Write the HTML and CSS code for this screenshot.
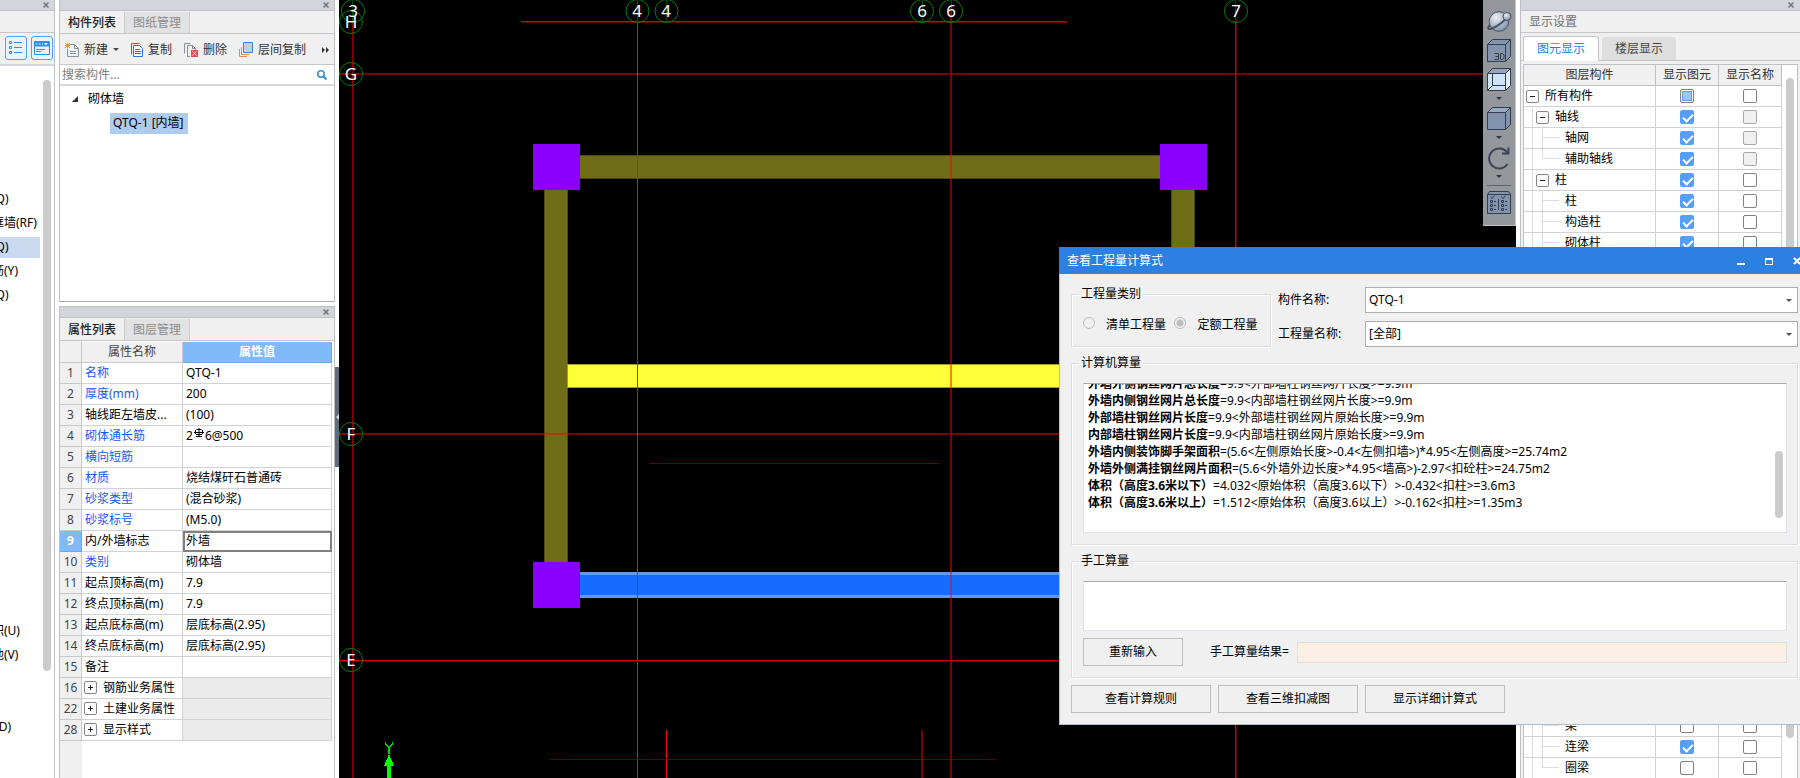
FILE: index.html
```html
<!DOCTYPE html>
<html lang="zh-CN">
<head>
<meta charset="utf-8">
<title>查看工程量计算式</title>
<link rel="stylesheet" href="styles.css">
</head>
<body>
<div class="app">

  <nav class="modules">
    <div class="strip"><button class="close" aria-label="关闭"><svg viewBox="0 0 6 6"><path d="M.5 .5 5.5 5.5M5.5 .5 .5 5.5"/></svg></button></div>
    <div class="modules-head"></div>
    <div class="modules-tools">
      <button class="mode" aria-label="列表视图"><svg width="14" height="14" viewBox="0 0 14 14" fill="none" stroke="#2f8fe8"><path d="M.5 .5h2v2h-2zM.5 5.5h2v2h-2zM.5 10.500h2v2h-2zM5 1.500h8M5 6.500h8M5 11.500h8"/></svg></button>
      <button class="mode" aria-label="面板视图"><svg width="16" height="14" viewBox="0 0 16 14" fill="none" stroke="#2f8fe8"><path d="M.5 .5h15v13h-15z"/><path d="M1 1h14v4H1z" fill="#2f8fe8"/><path d="M2 8.500h9M2 10.500h5"/><path d="M2 3h1.500M5 3h1.500M8 3h1" stroke="#fff"/><path d="M10 2h4l-2 2.500z" fill="#fff" stroke="none"/></svg></button>
    </div>
    <div class="modules-body">
      <ul class="module-list">
        <li>剪力墙(Q)</li>
        <li>人防门框墙(RF)</li>
        <li class="is-current">砌体墙(Q)</li>
        <li>砌体加筋(Y)</li>
        <li>保温墙(Q)</li>
        <li class="module-gap"></li>
        <li>建筑面积(U)</li>
        <li>土建其他(V)</li>
        <li></li><li></li>
        <li>自定义 (D)</li>
      </ul>
      <div class="scroll-thumb modules-thumb"></div>
    </div>
  </nav>

  <div class="side">
    <section class="panel components">
      <div class="strip"><button class="close" aria-label="关闭"><svg viewBox="0 0 6 6"><path d="M.5 .5 5.5 5.5M5.5 .5 .5 5.5"/></svg></button></div>
      <div class="tabs"><button class="tab is-active">构件列表</button><button class="tab">图纸管理</button></div>
      <div class="toolbar">
        <button class="tool tool-new"><svg width="14" height="14" viewBox="0 0 14 14" fill="none"><path d="M4.500 1.500h5l4 4v8h-11v-8" fill="#f4f5f6" stroke="#87909b"/><path d="M9.500 1.500v4h4M5 8.500h6M5 10.500h6" stroke="#87909b"/><path d="M0 0l5 5M5 0L0 5M2.500 0v5M0 2.500h5" stroke="#f0962e"/></svg>新建<i class="caret"></i></button>
        <button class="tool tool-copy"><svg width="12" height="14" viewBox="0 0 12 14" fill="none" stroke="#2e75cf"><path d="M8.500 .5h-8v11"/><path d="M2.500 2.500h6l3 3v8h-9z" fill="#fff"/><path d="M4 6.500h5M4 8.500h6M4 10.500h6"/></svg>复制</button>
        <button class="tool tool-delete"><svg width="14" height="14" viewBox="0 0 14 14" fill="none" stroke="#87909b"><path d="M.5 10.500v-10h6"/><path d="M6 13.500H3.500v-11h5l3 3V7M8.500 2.500v3h3"/><path d="M7 7h7v7H7z" fill="#d8514f" stroke="none"/><path d="M8.500 8.500l4 4m0-4l-4 4" stroke="#fff"/></svg>删除</button>
        <button class="tool tool-floor"><svg width="14" height="15" viewBox="0 0 14 15" fill="none"><path d="M.5 7v7.500H8M2.500 5v7.500H10" stroke="#ec8b4c"/><path d="M4.500 .5h9v10h-9z" fill="#b5d4fb" stroke="#3b82db"/></svg>层间复制</button>
        <button class="more" aria-label="更多"><svg width="8" height="6" viewBox="0 0 8 6"><path d="M0 0l3 3-3 3zM4 0l3 3-3 3z" fill="#333"/></svg></button>
      </div>
      <label class="search"><input type="text" placeholder="搜索构件..." aria-label="搜索构件"><svg width="10" height="10" viewBox="0 0 10 10" fill="none" stroke="#2f93cf" stroke-width="1.500"><circle cx="4" cy="4" r="3.200"/><path d="M6.500 6.500 9.500 9.500" stroke-width="2"/></svg></label>
      <ul class="tree">
        <li class="tree-group"><svg width="6" height="6" viewBox="0 0 6 6"><path d="M6 0v6H0z" fill="#333"/></svg>砌体墙</li>
        <li class="tree-leaf"><span>QTQ-1 [内墙]</span></li>
      </ul>
    </section>

    <section class="panel properties">
      <div class="strip"><button class="close" aria-label="关闭"><svg viewBox="0 0 6 6"><path d="M.5 .5 5.5 5.5M5.5 .5 .5 5.5"/></svg></button></div>
      <div class="tabs"><button class="tab is-active">属性列表</button><button class="tab">图层管理</button></div>
      <div class="prop-body">
      <table class="props">
        <colgroup><col class="c-num"><col class="c-name"><col></colgroup>
        <thead><tr><th></th><th>属性名称</th><th class="is-picked">属性值</th></tr></thead>
        <tbody>
          <tr><th>1</th><td class="link">名称</td><td>QTQ-1</td></tr>
          <tr><th>2</th><td class="link">厚度(mm)</td><td>200</td></tr>
          <tr><th>3</th><td>轴线距左墙皮...</td><td>(100)</td></tr>
          <tr><th>4</th><td class="link">砌体通长筋</td><td>2<svg class="rebar" width="10" height="10" viewBox="0 0 10 10" fill="none" stroke="#000"><path d="M2.500 1.500h5M1.500 2v4M8.500 2v4M2 6.500h6M5 0v9M0 4.500h10M2 8.500h6"/></svg>6@500</td></tr>
          <tr><th>5</th><td class="link">横向短筋</td><td></td></tr>
          <tr><th>6</th><td class="link">材质</td><td>烧结煤矸石普通砖</td></tr>
          <tr><th>7</th><td class="link">砂浆类型</td><td>(混合砂浆)</td></tr>
          <tr><th>8</th><td class="link">砂浆标号</td><td>(M5.0)</td></tr>
          <tr class="is-current"><th>9</th><td>内/外墙标志</td><td>外墙</td></tr>
          <tr><th>10</th><td class="link">类别</td><td>砌体墙</td></tr>
          <tr><th>11</th><td>起点顶标高(m)</td><td>7.9</td></tr>
          <tr><th>12</th><td>终点顶标高(m)</td><td>7.9</td></tr>
          <tr><th>13</th><td>起点底标高(m)</td><td>层底标高(2.95)</td></tr>
          <tr><th>14</th><td>终点底标高(m)</td><td>层底标高(2.95)</td></tr>
          <tr><th>15</th><td>备注</td><td></td></tr>
          <tr class="group"><th>16</th><td><button class="fold plus" aria-label="展开"></button>钢筋业务属性</td><td></td></tr>
          <tr class="group"><th>22</th><td><button class="fold plus" aria-label="展开"></button>土建业务属性</td><td></td></tr>
          <tr class="group"><th>28</th><td><button class="fold plus" aria-label="展开"></button>显示样式</td><td></td></tr>
        </tbody>
      </table>
      </div>
    </section>
  </div>

  <div class="splitter"><button aria-label="收起"><svg width="3" height="6" viewBox="0 0 3 6"><path d="M3 0v6L0 3z" fill="#d5d9dd"/></svg></button></div>

  <main class="canvas">
    <svg class="plan" width="1177" height="778" viewBox="339 0 1177 778" shape-rendering="crispEdges">
      <g fill="#6f6d17" stroke="#4b4a12">
        <rect x="578.500" y="155.500" width="584" height="23"/>
        <rect x="544.500" y="188.500" width="23" height="376"/>
        <rect x="1171.500" y="188.500" width="23" height="200"/>
      </g>
      <rect x="567.500" y="364.500" width="620" height="23" fill="#ffff38" stroke="#a3a02a"/>
      <path d="M579 572h600v26H579z" fill="#6c93d8"/>
      <path d="M579 573h600v24H579z" fill="#5c9bff"/>
      <path d="M579 575h600v20H579z" fill="#156cff"/>
      <path d="M533 144h47v46h-47zM1160 144h47v46h-47zM533 562h47v46h-47z" fill="#8a00ff"/>
      <g fill="#f00" fill-opacity=".5">
        <path d="M352 10h2v768h-2zM950 10h2v768h-2zM339 73h1177v2H339zM339 433h1177v2H339zM921 730h2v48h-2z"/>
      </g>
      <path d="M637 10h1v768h-1zM666 730h1v48h-1z" fill="#f00e0e"/>
      <path d="M1235 10h1v768h-1zM521 21h546v1H521zM339 660h1177v1H339z" fill="#cc0000"/>
      <path d="M1236 20h1v758h-1zM521 22h546v1H521zM339 661h1177v1H339zM649 463h290v1H649zM550 759h446v1H550z" fill="#600000"/>
      <path d="M637 0h1v22h-1zM666 0h1v22h-1zM922 0h1v22h-1zM951 0h1v22h-1zM1235 0h1v22h-1zM352 0h1v22h-1z" fill="#064a06"/>
      <g fill="none" stroke="#078007" shape-rendering="auto">
        <circle cx="353" cy="11" r="11.500"/><circle cx="351" cy="22" r="11.500"/><circle cx="351" cy="74" r="11.500"/><circle cx="351" cy="434" r="11.500"/><circle cx="351" cy="660" r="11.500"/>
        <circle cx="637.500" cy="11" r="11.500"/><circle cx="666.500" cy="11" r="11.500"/><circle cx="922" cy="11" r="11.500"/><circle cx="951" cy="11" r="11.500"/><circle cx="1236" cy="11" r="11.500"/>
      </g>
      <g class="axis">
        <text x="353" y="17">3</text><text x="351" y="28">H</text><text x="351" y="80">G</text><text x="351" y="440">F</text><text x="351" y="666">E</text>
        <text x="637" y="17">4</text><text x="666" y="17">4</text><text x="922" y="17">6</text><text x="951" y="17">6</text><text x="1236" y="17">7</text>
      </g>
      <path d="M389 754l5 12h-3v12h-4v-12h-3z" fill="#0f0"/>
      <path d="M385.500 742v2l3.500 4v6M392.500 742v2l-3.500 4" fill="none" stroke="#0d0" stroke-width="1.500"/>
    </svg>

    <div class="view-tools">
      <button aria-label="动态观察"><svg width="26" height="24" viewBox="0 0 26 24" fill="none" stroke="#4a5260"><defs><radialGradient id="ball" cx=".35" cy=".3" r=".8"><stop offset="0" stop-color="#eef2f6"/><stop offset="1" stop-color="#7389a6"/></radialGradient></defs><circle cx="13" cy="11.500" r="9.800" fill="url(#ball)"/><path d="M4 15c-3 3-2 5 2 3.500C12 16 20 10 23 5" stroke-width="2"/><circle cx="21" cy="6.500" r="4" fill="url(#ball)"/></svg></button>
      <button aria-label="三维"><svg width="24" height="24" viewBox="0 0 24 24" fill="#8294ad" stroke="#333d4c"><path d="M.5 5.500l5-5h18v17l-5 5H.5z"/><path d="M.5 5.500h18v17M18.500 5.500l5-5" fill="none"/><path d="M7.500 14.500h4v6h-4M8.500 17.500h3M13.500 14.500h2l1.500 1.500v3l-1.500 1.500h-2z" fill="none"/></svg></button>
      <button aria-label="线框"><svg width="24" height="24" viewBox="0 0 24 24" fill="#cfe4fa" stroke="#333d4c"><path d="M.5 5.500l5-5h18v17l-5 5H.5z"/><path d="M.5 5.500l5-5h18l-5 5z" fill="#94a6be"/><path d="M18.500 5.500l5-5v17l-5 5z" fill="#e2eefb"/><path d="M.5 5.500h18v17M5.500 5.500v12h13M5.500 17.500l-5 5" fill="none"/></svg></button>
      <i class="caret"></i>
      <button aria-label="实体"><svg width="24" height="24" viewBox="0 0 24 24" fill="#8294ad" stroke="#333d4c"><path d="M.5 5.500l5-5h18v17l-5 5H.5z"/><path d="M.5 5.500l5-5h18l-5 5z" fill="#9aabc0"/><path d="M18.500 5.500v17" fill="none"/></svg></button>
      <i class="caret"></i>
      <button aria-label="旋转"><svg width="24" height="24" viewBox="0 0 24 24" fill="none" stroke="#3b4452" stroke-width="2"><path d="M20.500 7A10 10 0 1 0 20.500 18"/><path d="M21.500 1.500v6H15"/></svg></button>
      <i class="caret"></i>
      <hr>
      <button aria-label="显示设置"><svg width="24" height="24" viewBox="0 0 24 24" fill="#8294ad" stroke="#333d4c"><path d="M.5 3.500l2-3h19l2 3v19H.5z"/><path d="M.5 3.500h23M11.500 8v11" fill="none"/><path d="M3.500 5.500l1.500 2 2.500-3M14.500 5.500l1.500 2 2.500-3M3.500 9.500h2v2h-2zM3.500 13.500h2v2h-2zM3.500 17.500h2v2h-2zM14.500 9.500h2v2h-2zM14.500 13.500h2v2h-2zM14.500 17.500h2v2h-2zM7 10.500h2M7 14.500h2M7 18.500h2M18 10.500h2M18 14.500h2M18 18.500h2" fill="none"/></svg></button>
    </div>
  </main>

  <aside class="display">
    <div class="strip"><button class="close" aria-label="关闭"><svg viewBox="0 0 6 6"><path d="M.5 .5 5.5 5.5M5.5 .5 .5 5.5"/></svg></button></div>
    <h2>显示设置</h2>
    <div class="display-tabs"><button class="is-active">图元显示</button><button>楼层显示</button></div>
    <div class="display-body">
      <table class="layers">
        <colgroup><col><col class="c-check"><col class="c-check"></colgroup>
        <thead><tr><th>图层构件</th><th>显示图元</th><th>显示名称</th></tr></thead>
        <tbody>
          <tr class="l1"><td><button class="fold" aria-label="折叠"></button>所有构件</td><td><input type="checkbox" class="mixed" aria-label="显示图元"></td><td><input type="checkbox" aria-label="显示名称"></td></tr>
          <tr class="l2"><td><button class="fold" aria-label="折叠"></button>轴线</td><td><input type="checkbox" checked aria-label="显示图元"></td><td><input type="checkbox" disabled aria-label="显示名称"></td></tr>
          <tr class="l3"><td>轴网</td><td><input type="checkbox" checked aria-label="显示图元"></td><td><input type="checkbox" disabled aria-label="显示名称"></td></tr>
          <tr class="l3 last"><td>辅助轴线</td><td><input type="checkbox" checked aria-label="显示图元"></td><td><input type="checkbox" disabled aria-label="显示名称"></td></tr>
          <tr class="l2"><td><button class="fold" aria-label="折叠"></button>柱</td><td><input type="checkbox" checked aria-label="显示图元"></td><td><input type="checkbox" aria-label="显示名称"></td></tr>
          <tr class="l3"><td>柱</td><td><input type="checkbox" checked aria-label="显示图元"></td><td><input type="checkbox" aria-label="显示名称"></td></tr>
          <tr class="l3"><td>构造柱</td><td><input type="checkbox" checked aria-label="显示图元"></td><td><input type="checkbox" aria-label="显示名称"></td></tr>
          <tr class="l3"><td>砌体柱</td><td><input type="checkbox" checked aria-label="显示图元"></td><td><input type="checkbox" aria-label="显示名称"></td></tr>
          <tr class="covered"><td></td><td></td><td></td></tr>
          <tr class="l3"><td>梁</td><td><input type="checkbox" aria-label="显示图元"></td><td><input type="checkbox" aria-label="显示名称"></td></tr>
          <tr class="l3"><td>连梁</td><td><input type="checkbox" checked aria-label="显示图元"></td><td><input type="checkbox" aria-label="显示名称"></td></tr>
          <tr class="l3 last"><td>圈梁</td><td><input type="checkbox" aria-label="显示图元"></td><td><input type="checkbox" aria-label="显示名称"></td></tr>
        </tbody>
      </table>
      <div class="scroll-thumb display-thumb"></div>
    </div>
  </aside>

  <div class="dialog" role="dialog" aria-labelledby="dlg-title">
    <header>
      <h1 id="dlg-title">查看工程量计算式</h1>
      <button aria-label="最小化"><svg width="10" height="10" viewBox="0 0 10 10"><path d="M1 7h8v2H1z" fill="#fff"/></svg></button>
      <button aria-label="最大化"><svg width="10" height="10" viewBox="0 0 10 10"><path d="M1 2h8v7H1zM2 4v4h6V4z" fill="#fff" fill-rule="evenodd"/></svg></button>
      <button aria-label="关闭"><svg width="10" height="10" viewBox="0 0 10 10" stroke="#fff" stroke-width="2"><path d="M2 2l6 6M8 2L2 8"/></svg></button>
    </header>
    <div class="dialog-body">
      <div class="top-row">
        <fieldset class="kind">
          <legend>工程量类别</legend>
          <label><input type="radio" name="kind" disabled>清单工程量</label>
          <label><input type="radio" name="kind" checked disabled>定额工程量</label>
        </fieldset>
        <div class="fields">
          <label for="f-comp">构件名称:</label>
          <div class="select"><select id="f-comp"><option>QTQ-1</option></select></div>
          <label for="f-qty">工程量名称:</label>
          <div class="select"><select id="f-qty"><option>[全部]</option></select></div>
        </div>
      </div>

      <fieldset class="block">
        <legend>计算机算量</legend>
        <div class="result">
          <ul>
            <li><b>外墙外侧钢丝网片总长度</b>=9.9&lt;外部墙柱钢丝网片长度&gt;=9.9m</li>
            <li><b>外墙内侧钢丝网片总长度</b>=9.9&lt;内部墙柱钢丝网片长度&gt;=9.9m</li>
            <li><b>外部墙柱钢丝网片长度</b>=9.9&lt;外部墙柱钢丝网片原始长度&gt;=9.9m</li>
            <li><b>内部墙柱钢丝网片长度</b>=9.9&lt;内部墙柱钢丝网片原始长度&gt;=9.9m</li>
            <li><b>外墙内侧装饰脚手架面积</b>=(5.6&lt;左侧原始长度&gt;-0.4&lt;左侧扣墙&gt;)*4.95&lt;左侧高度&gt;=25.74m2</li>
            <li><b>外墙外侧满挂钢丝网片面积</b>=(5.6&lt;外墙外边长度&gt;*4.95&lt;墙高&gt;)-2.97&lt;扣砼柱&gt;=24.75m2</li>
            <li><b>体积（高度3.6米以下）</b>=4.032&lt;原始体积（高度3.6以下）&gt;-0.432&lt;扣柱&gt;=3.6m3</li>
            <li><b>体积（高度3.6米以上）</b>=1.512&lt;原始体积（高度3.6以上）&gt;-0.162&lt;扣柱&gt;=1.35m3</li>
          </ul>
          <div class="scroll-thumb result-thumb"></div>
        </div>
      </fieldset>

      <fieldset class="block">
        <legend>手工算量</legend>
        <textarea aria-label="手工算量"></textarea>
        <div class="manual-row">
          <button class="btn">重新输入</button>
          <label for="f-manual">手工算量结果=</label>
          <input id="f-manual" type="text" readonly>
        </div>
      </fieldset>

      <div class="actions">
        <button class="btn">查看计算规则</button>
        <button class="btn">查看三维扣减图</button>
        <button class="btn">显示详细计算式</button>
      </div>
    </div>
  </div>
</div>
</body>
</html>
```

FILE: styles.css
```css
* { box-sizing: border-box; }

body {
  margin: 0;
  overflow: hidden;
  background: #fff;
  color: #000;
  font: 12px/20px "Noto Sans", "Noto Sans CJK SC", sans-serif;
}

button, input, select, textarea {
  margin: 0;
  padding: 0;
  border: 0;
  background: none;
  color: inherit;
  font: inherit;
}

svg { display: block; flex: none; }
ul { list-style: none; margin: 0; padding: 0; }
fieldset { min-width: 0; margin: 0; }

.app {
  position: relative;
  display: flex;
  height: 100vh;
  overflow: hidden;
}

/* shared pieces */

.strip {
  display: flex;
  flex: none;
  align-items: center;
  justify-content: flex-end;
  height: 11px;
  padding-right: 5px;
  background: #d4d5da;
  border-bottom: 1px solid #bfc1c6;
}

.close { display: block; width: 6px; }
.close svg { width: 6px; height: 6px; fill: none; stroke: #70737a; stroke-width: 1.500; }

.scroll-thumb {
  flex: none;
  width: 8px;
  border-radius: 4px;
  background: #cbcbcb;
}

.caret {
  width: 0;
  border: 3px solid transparent;
  border-top-color: #444;
  border-bottom: 0;
}

.fold {
  position: relative;
  flex: none;
  width: 13px;
  height: 13px;
  background: #fff;
  border: 1px solid #858585;
  border-radius: 2px;
}

.fold::before, .fold.plus::after {
  content: "";
  position: absolute;
  left: 3px;
  top: 5px;
  width: 5px;
  height: 1px;
  background: #222;
}

.fold.plus::after { transform: rotate(90deg); }

/* module list at the far left */

.modules {
  display: flex;
  flex: none;
  flex-direction: column;
  width: 55px;
  overflow: hidden;
  border-right: 1px solid #bfc1c6;
}

.modules-head { flex: none; height: 22px; background: #f0f0f0; border-bottom: 1px solid #c4c6cb; }

.modules-tools {
  display: flex;
  flex: none;
  gap: 4px;
  height: 33px;
  padding: 3px 1px 3px 5px;
  background: #f0f0f0;
  border-bottom: 2px solid #d5d6d9;
}

.mode {
  display: grid;
  place-items: center;
  width: 22px;
  height: 24px;
  background: #e9f3fe;
  border: 1px solid #4fa3f5;
  border-radius: 3px;
}

.modules-body { display: flex; flex: 1; justify-content: space-between; padding-right: 3px; }

.module-list { width: 84px; margin-left: -44px; padding-top: 123px; white-space: nowrap; }
.module-list li { height: 21px; margin-bottom: 3px; }
.module-list .is-current { background: #c9d9f0; }
.module-list .module-gap { height: 309px; }

.modules-thumb { height: 591px; margin-top: 14px; }

/* component list and properties */

.side {
  display: flex;
  flex: none;
  flex-direction: column;
  gap: 4px;
  width: 276px;
  margin-left: 4px;
}

.panel {
  display: flex;
  flex-direction: column;
  border: 1px solid #bfc1c6;
  border-top: 0;
}

.components { height: 302px; border-bottom-color: #aaa; }
.properties { flex: 1; border-top: 1px solid #bfc1c6; border-bottom: 0; min-height: 0; }

.tabs {
  display: flex;
  flex: none;
  height: 23px;
  padding-top: 1px;
  background: #f0f0f0;
  border-bottom: 1px solid #c4c6cb;
}

.tab {
  width: 65px;
  background: #e2e2e2;
  border-right: 1px solid #c9cacd;
  color: #8c8c8c;
  line-height: 20px;
}

.tab.is-active { background: #f0f0f0; color: #222; font-weight: 500; }

.toolbar {
  display: flex;
  flex: none;
  align-items: center;
  gap: 12px;
  height: 31px;
  padding: 1px 4px 0 5px;
  background: #f0f0f0;
  border-bottom: 1px solid #c4c6cb;
  color: #333;
}

.tool { display: flex; align-items: center; gap: 5px; white-space: nowrap; }
.more { margin-left: auto; }

.search {
  display: flex;
  flex: none;
  align-items: center;
  height: 21px;
  padding: 0 7px 0 2px;
  border-bottom: 2px solid #d8d8d8;
}

.search input { flex: 1; min-width: 0; outline: 0; }
.search input::placeholder { color: #7d7d7d; }

.tree { padding-top: 1px; }
.tree li { display: flex; align-items: center; height: 24px; }
.tree-group { gap: 10px; padding-left: 12px; }
.tree-leaf { padding-left: 50px; }
.tree-leaf span { padding: 0 4px 1px 3px; background: #afcbee; }

.prop-body { flex: 1; background: linear-gradient(90deg, #f0f0f0 22px, #fff 22px); padding: 1px 2px 0 0; }

table { border-collapse: separate; border-spacing: 0; table-layout: fixed; width: 100%; }
th { font-weight: 400; }

.props th, .props td {
  height: 21px;
  padding: 0 0 0 3px;
  border-right: 1px solid #d2d2d2;
  border-bottom: 1px solid #d2d2d2;
  line-height: 20px;
  text-align: left;
  white-space: nowrap;
  overflow: hidden;
}

.props td { background: #fff; }
.props th { padding: 0; background: #f0f0f0; border-color: #c8c9cb; color: #444; text-align: center; }
.props .c-num { width: 22px; }
.props .c-name { width: 101px; }
.props .link { color: #1759f0; }
.props thead .is-picked, .props .is-current th { background: #80bafb; color: #fff; font-weight: 700; border-color: #6fa8e8; }
.props .is-current td:last-child { outline: 2px solid #808080; outline-offset: -2px; }
.props .group td:last-child { background: #ebebeb; }
.props .fold { margin: 0 6px 0 -1px; vertical-align: -1px; }
.rebar { display: inline-block; margin: 0 1px; vertical-align: 2px; }

.splitter { display: flex; flex: none; align-items: center; width: 4px; background: #fff; }
.splitter button { display: grid; place-items: center end; width: 4px; height: 100px; margin-top: 56px; background: #5f6b79; }

/* drawing area */

.canvas { position: relative; flex: 1; min-width: 0; overflow: hidden; background: #000; }
.axis { fill: #fff; font-size: 17px; text-anchor: middle; }

.view-tools {
  position: absolute;
  top: 0;
  right: 0;
  display: flex;
  flex-direction: column;
  align-items: center;
  width: 33px;
  height: 226px;
  padding-top: 10px;
  background: #94979c;
  border: solid #c3c5c9;
  border-width: 0 1px 1px 0;
}

.view-tools button { margin-bottom: 5px; }
.view-tools .caret { margin-bottom: 7px; border-top-color: #2f3744; }
.view-tools hr { width: 24px; height: 1px; margin: 0 0 5px; border: 0; background: #5c626b; }

/* display settings */

.display {
  display: flex;
  flex: none;
  flex-direction: column;
  width: 280px;
  margin-left: 4px;
  border-left: 1px solid #bfc1c6;
  background: #f0f0f0;
}

.display .strip { padding-right: 6px; }

.display h2 {
  flex: none;
  height: 22px;
  margin: 0;
  padding-left: 8px;
  border-bottom: 1px solid #c4c6cb;
  color: #707070;
  font-size: 12px;
  font-weight: 400;
  line-height: 21px;
}

.display-tabs {
  display: flex;
  flex: none;
  align-items: flex-end;
  gap: 3px;
  height: 28px;
  padding-left: 2px;
  border-bottom: 1px solid #c4c6cb;
}

.display-tabs button {
  width: 74px;
  height: 23px;
  background: #dedede;
  border-radius: 3px 3px 0 0;
  color: #444;
  line-height: 24px;
}

.display-tabs .is-active {
  width: 76px;
  height: 25px;
  margin-bottom: -1px;
  background: #fff;
  border: 1px solid #c4c6cb;
  border-bottom: 0;
  color: #2a80e0;
}

.display-body {
  display: flex;
  flex: 1;
  min-height: 0;
  gap: 4px;
  margin: 3px 2px 0;
  padding-right: 3px;
  background: #fff;
  border: solid #bfc1c6;
  border-width: 1px 1px 0 1px;
  overflow: hidden;
}

.layers { flex: 1; align-self: flex-start; min-width: 0; }
.layers .c-check { width: 63px; }
.layers th, .layers td {
  height: 21px;
  padding: 0;
  border-right: 1px solid #d2d2d2;
  border-bottom: 1px solid #d2d2d2;
  line-height: 20px;
  text-align: center;
  white-space: nowrap;
}

.layers th { background: #f0f0f0; border-color: #c0c0c0; color: #333; }
.layers td:first-child { text-align: left; background-repeat: no-repeat; }
.layers .fold { margin-right: 6px; vertical-align: -2px; }
.layers .l1 td:first-child { padding-left: 2px; }
.layers .l2 td:first-child { padding-left: 12px; background-image: linear-gradient(#dcdcdc, #dcdcdc); background-size: 1px 100%; background-position: 8px 0; }
.layers .l3 td:first-child {
  padding-left: 41px;
  background-image: linear-gradient(#dcdcdc, #dcdcdc), linear-gradient(#dcdcdc, #dcdcdc), linear-gradient(#dcdcdc, #dcdcdc);
  background-size: 1px 100%, 1px 100%, 16px 1px;
  background-position: 8px 0, 18px 0, 19px 9px;
}
.layers .l3.last td:first-child { background-size: 1px 100%, 1px 10px, 16px 1px; }
.layers .covered td { height: 462px; }

.layers input {
  display: block;
  appearance: none;
  width: 14px;
  height: 14px;
  margin: 0 auto;
  background: #fff;
  border: 1px solid #808080;
  border-radius: 2px;
}

.layers input:disabled { background: #f0f0f0; border-color: #a8a8a8; }
.layers input.mixed { background: #9cc7fb; border-color: #808080; box-shadow: inset 0 0 0 1px #fff, inset 0 0 0 2px #559df4; }
.layers input:checked { background: #559ffa; border-color: #559ffa; }
.layers input:checked::before {
  content: "";
  display: block;
  width: 8px;
  height: 4px;
  margin: 3px 0 0 2px;
  border: solid #fff;
  border-width: 0 0 2px 2px;
  transform: rotate(-45deg);
}

.display-thumb { height: 660px; margin-top: 13px; }

/* quantity formula dialog, floating over the workspace */

.dialog {
  position: absolute;
  top: 247px;
  right: -6px;
  width: 747px;
  background: #f0f0f0;
  border: solid #b4bccb;
  border-width: 0 1px 1px;
}

.dialog header {
  display: flex;
  align-items: center;
  gap: 18px;
  height: 27px;
  margin: 0 -1px;
  padding: 0 4px 0 8px;
  background: #2c80e2;
  color: #fff;
}

.dialog h1 { flex: 1; margin: 0; font-size: 12px; font-weight: 400; }

.dialog-body {
  display: flex;
  flex-direction: column;
  gap: 7px;
  padding: 11px 7px 11px 11px;
}

fieldset {
  border: 1px solid #dedede;
  box-shadow: 1px 1px 0 #fff, inset 1px 1px 0 #fff;
}

legend { margin-left: -4px; padding: 0 2px; background: #f0f0f0; line-height: 18px; }

.top-row { display: flex; gap: 7px; }

.kind { display: flex; flex: none; width: 200px; height: 62px; padding: 10px 11px 0; }
.kind label { display: flex; flex: 1; align-items: center; gap: 11px; height: 24px; white-space: nowrap; }
.kind label + label { gap: 12px; padding-left: 5px; }

.kind input {
  appearance: none;
  flex: none;
  width: 12px;
  height: 12px;
  margin-bottom: 4px;
  border: 1px solid #bcbcbc;
  border-radius: 50%;
}

.kind input:checked { background: radial-gradient(#bdbdbd 3px, transparent 4px); }

.fields {
  display: grid;
  flex: 1;
  grid-template-columns: 87px 1fr;
  grid-auto-rows: 26px;
  align-items: center;
  row-gap: 8px;
  padding-top: 2px;
}

.select { position: relative; height: 26px; background: #fff; border: 1px solid #adadad; }
.select select { appearance: none; width: 100%; height: 24px; padding-left: 3px; outline: 0; }
.select::after {
  content: "";
  position: absolute;
  top: 11px;
  right: 5px;
  border: 3px solid transparent;
  border-top-color: #555;
  border-bottom: 0;
  pointer-events: none;
}

.block { padding: 11px 10px 11px 11px; }

.result {
  display: flex;
  justify-content: space-between;
  height: 150px;
  padding-right: 3px;
  overflow: hidden;
  background: #fff;
  border: 1px solid #dfe3e9;
  border-top-color: #a8a8a8;
}

.result ul { margin-top: -9px; padding-left: 4px; line-height: 17px; white-space: nowrap; }
.result li { height: 17px; }
.result-thumb { height: 67px; margin-top: 67px; }

textarea {
  display: block;
  width: 100%;
  height: 50px;
  background: #fff;
  border: 1px solid #dfe3e9;
  border-top-color: #a8a8a8;
  resize: none;
}

.manual-row { display: flex; align-items: center; margin-top: 7px; }
.manual-row .btn { width: 100px; }
.manual-row label { margin: 0 8px 0 27px; }
.manual-row input { flex: 1; height: 21px; background: #fbefe4; border: 1px solid #dfdfdf; }

.btn { width: 140px; height: 28px; background: #f0f0f0; border: 1px solid #bebebe; }
.actions { display: flex; gap: 7px; }
```
